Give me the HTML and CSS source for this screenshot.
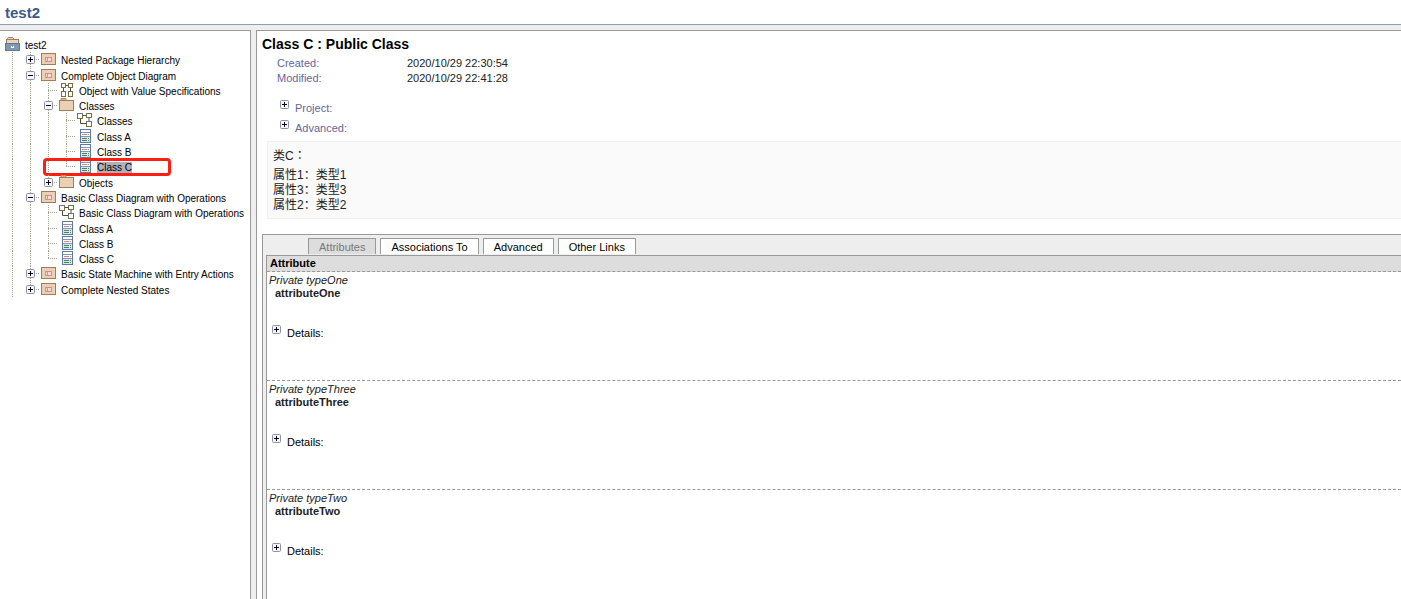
FILE: index.html
```html
<!DOCTYPE html>
<html lang="zh-CN">
<head>
    <meta charset="UTF-8">
    <meta name="viewport" content="width=device-width, initial-scale=1.0">
    <title>test2</title>
    <link rel="stylesheet" href="styles.css">
</head>
<body>
    <!-- 图标定义 -->
    <svg class="defs" aria-hidden="true">
        <symbol id="i-root" viewBox="0 0 15 14">
            <path d="M2.5 3V1.5L3.5 .5H7.5L8.5 1.5V3" fill="#ecd3bd" stroke="#a37b58"/>
            <rect x="1.5" y="2.5" width="12" height="5" fill="#ecd3bd" stroke="#a37b58"/>
            <rect x=".5" y="6.5" width="14" height="7" fill="#8099b3" stroke="#5c7896"/>
            <path d="M6 9h1v1h1v-1h1v2h-3z" fill="#fff"/>
        </symbol>
        <symbol id="i-package" viewBox="0 0 15 14">
            <rect x=".5" y="1.5" width="14" height="11" fill="#ecd0b5" stroke="#a37b58"/>
            <rect x="4.5" y="5.5" width="6" height="4" fill="#f8dcd8" stroke="#cf8f90"/>
            <path d="M6.5 5.5v4" stroke="#cf8f90"/>
        </symbol>
        <symbol id="i-folder" viewBox="0 0 15 14">
            <path d="M2 2.5V.5H7V2.5" fill="#d9ae8a" stroke="#b98d69"/>
            <rect x=".5" y="2.5" width="14" height="10" fill="#ecd0b5" stroke="#a37b58"/>
        </symbol>
        <symbol id="i-object" viewBox="0 0 15 14">
            <path d="M6 2.5h3M4.5 5v4M11.5 5v4" stroke="#4c4c3a" fill="none"/>
            <g fill="#fff" stroke="#727246">
                <rect x="2.5" y=".5" width="4" height="4"/>
                <rect x="9.5" y=".5" width="4" height="4"/>
                <rect x="2.5" y="8.5" width="4" height="5"/>
                <rect x="9.5" y="8.5" width="4" height="5"/>
            </g>
        </symbol>
        <symbol id="i-diagram" viewBox="0 0 15 14">
            <path d="M5 2.5h5M3.5 5v5.5H10M12 5v4" stroke="#4c4c3a" fill="none"/>
            <rect x=".5" y=".5" width="5" height="5" fill="#fff" stroke="#727246"/>
            <path d="M0 .5h6" stroke="#5e78a8"/>
            <rect x="9.5" y=".5" width="5" height="4" fill="#fff" stroke="#727246"/>
            <rect x="9.5" y="8.5" width="5" height="5" fill="#fff" stroke="#727246"/>
            <path d="M9 8.5h6" stroke="#5e78a8"/>
        </symbol>
        <symbol id="i-class" viewBox="0 0 15 14">
            <rect x="3.5" y=".5" width="10" height="13" fill="#fff" stroke="#5e78a8"/>
            <path d="M4 8h9v5H4z" fill="#d3ede0"/>
            <path d="M4 3.5h9M4 7.5h9" stroke="#7f95bb"/>
            <path d="M5 5.5h5M11 5.5h1" stroke="#e08080"/>
            <path d="M5 9.5h5M11 9.5h1M5 11.5h5M11 11.5h1" stroke="#4f7f5e"/>
        </symbol>
        <symbol id="i-plus" viewBox="0 0 9 9">
            <rect x=".5" y=".5" width="8" height="8" rx="1" fill="#f4f4fa" stroke="#8c90a4"/>
            <path d="M2 4.5h5M4.5 2v5" stroke="#000"/>
        </symbol>
        <symbol id="i-minus" viewBox="0 0 9 9">
            <rect x=".5" y=".5" width="8" height="8" rx="1" fill="#f4f4fa" stroke="#8c90a4"/>
            <path d="M2 4.5h5" stroke="#000"/>
        </symbol>
    </svg>

    <header class="page-header">
        <h1>test2</h1>
    </header>

    <div class="layout">
        <!-- 左侧目录树 -->
        <nav class="sidebar">
            <ul class="tree">
                <li><svg class="icon"><use href="#i-root"/></svg><a href="#">test2</a></li>
                <li><i class="line"></i><i class="tee"><button class="toggle" aria-label="展开"><svg><use href="#i-plus"/></svg></button></i><svg class="icon"><use href="#i-package"/></svg><a href="#">Nested Package Hierarchy</a></li>
                <li><i class="line"></i><i class="tee"><button class="toggle" aria-label="折叠"><svg><use href="#i-minus"/></svg></button></i><svg class="icon"><use href="#i-package"/></svg><a href="#">Complete Object Diagram</a></li>
                <li><i class="line"></i><i class="line"></i><i class="tee"></i><svg class="icon"><use href="#i-object"/></svg><a href="#">Object with Value Specifications</a></li>
                <li><i class="line"></i><i class="line"></i><i class="tee"><button class="toggle" aria-label="折叠"><svg><use href="#i-minus"/></svg></button></i><svg class="icon"><use href="#i-folder"/></svg><a href="#">Classes</a></li>
                <li><i class="line"></i><i class="line"></i><i class="line"></i><i class="tee"></i><svg class="icon"><use href="#i-diagram"/></svg><a href="#">Classes</a></li>
                <li><i class="line"></i><i class="line"></i><i class="line"></i><i class="tee"></i><svg class="icon"><use href="#i-class"/></svg><a href="#">Class A</a></li>
                <li><i class="line"></i><i class="line"></i><i class="line"></i><i class="tee"></i><svg class="icon"><use href="#i-class"/></svg><a href="#">Class B</a></li>
                <li class="marked"><i class="line"></i><i class="line"></i><i class="line"></i><i class="end"></i><svg class="icon"><use href="#i-class"/></svg><a href="#"><span class="selected">Class C</span></a></li>
                <li><i class="line"></i><i class="line"></i><i class="end"><button class="toggle" aria-label="展开"><svg><use href="#i-plus"/></svg></button></i><svg class="icon"><use href="#i-folder"/></svg><a href="#">Objects</a></li>
                <li><i class="line"></i><i class="tee"><button class="toggle" aria-label="折叠"><svg><use href="#i-minus"/></svg></button></i><svg class="icon"><use href="#i-package"/></svg><a href="#">Basic Class Diagram with Operations</a></li>
                <li><i class="line"></i><i class="line"></i><i class="tee"></i><svg class="icon"><use href="#i-diagram"/></svg><a href="#">Basic Class Diagram with Operations</a></li>
                <li><i class="line"></i><i class="line"></i><i class="tee"></i><svg class="icon"><use href="#i-class"/></svg><a href="#">Class A</a></li>
                <li><i class="line"></i><i class="line"></i><i class="tee"></i><svg class="icon"><use href="#i-class"/></svg><a href="#">Class B</a></li>
                <li><i class="line"></i><i class="line"></i><i class="end"></i><svg class="icon"><use href="#i-class"/></svg><a href="#">Class C</a></li>
                <li><i class="line"></i><i class="tee"><button class="toggle" aria-label="展开"><svg><use href="#i-plus"/></svg></button></i><svg class="icon"><use href="#i-package"/></svg><a href="#">Basic State Machine with Entry Actions</a></li>
                <li><i class="line"></i><i class="end"><button class="toggle" aria-label="展开"><svg><use href="#i-plus"/></svg></button></i><svg class="icon"><use href="#i-package"/></svg><a href="#">Complete Nested States</a></li>
            </ul>
        </nav>

        <!-- 元素详情 -->
        <main class="content">
            <h2>Class C : Public Class</h2>
            <dl class="meta">
                <dt>Created:</dt>
                <dd>2020/10/29 22:30:54</dd>
                <dt>Modified:</dt>
                <dd>2020/10/29 22:41:28</dd>
            </dl>
            <div class="sections">
                <div class="expander">
                    <button class="toggle" id="project"><svg><use href="#i-plus"/></svg></button>
                    <label for="project">Project:</label>
                </div>
                <div class="expander">
                    <button class="toggle" id="advanced"><svg><use href="#i-plus"/></svg></button>
                    <label for="advanced">Advanced:</label>
                </div>
            </div>

            <div class="notes">
                <p class="notes-title" lang="zh-TW">类C：</p>
                <p>属性1：类型1</p>
                <p>属性3：类型3</p>
                <p>属性2：类型2</p>
            </div>

            <div class="panel">
                <div class="tabs">
                    <button class="tab active">Attributes</button>
                    <button class="tab">Associations To</button>
                    <button class="tab">Advanced</button>
                    <button class="tab">Other Links</button>
                </div>
                <table class="attributes">
                    <thead>
                        <tr><th>Attribute</th></tr>
                    </thead>
                    <tbody>
                        <tr>
                            <td>
                                <p class="type">Private typeOne</p>
                                <p class="name">attributeOne</p>
                                <div class="expander">
                                    <button class="toggle" id="details1"><svg><use href="#i-plus"/></svg></button>
                                    <label for="details1">Details:</label>
                                </div>
                            </td>
                        </tr>
                        <tr>
                            <td>
                                <p class="type">Private typeThree</p>
                                <p class="name">attributeThree</p>
                                <div class="expander">
                                    <button class="toggle" id="details2"><svg><use href="#i-plus"/></svg></button>
                                    <label for="details2">Details:</label>
                                </div>
                            </td>
                        </tr>
                        <tr>
                            <td>
                                <p class="type">Private typeTwo</p>
                                <p class="name">attributeTwo</p>
                                <div class="expander">
                                    <button class="toggle" id="details3"><svg><use href="#i-plus"/></svg></button>
                                    <label for="details3">Details:</label>
                                </div>
                            </td>
                        </tr>
                    </tbody>
                </table>
            </div>
        </main>
    </div>
</body>
</html>
```
FILE: styles.css
```css
* {
    margin: 0;
    padding: 0;
    box-sizing: border-box;
}

body {
    display: flex;
    flex-direction: column;
    height: 100vh;
    overflow: hidden;
    font-family: "Liberation Sans", Arial, "Noto Sans CJK SC", sans-serif;
    font-size: 11px;
    line-height: 15px;
    color: #222;
    background: #eee;
}

.defs {
    display: none;
}

.page-header {
    padding: 4px 5px 2px;
    background: #fff;
    border-bottom: 1px solid #8c9db5;
}

.page-header h1 {
    font-size: 15px;
    line-height: 18px;
    color: #3d5a8c;
}

.layout {
    display: flex;
    flex: 1;
    gap: 5px;
    min-height: 0;
    padding-top: 5px;
}

/* 目录树 */
.sidebar {
    flex: 0 0 251px;
    padding: 6px 3px;
    overflow: hidden;
    background: #fff;
    border-top: 1px solid #999;
    border-right: 1px solid #999;
}

.tree {
    display: grid;
    grid-auto-rows: 1fr;
    height: 260px;
    list-style: none;
    font-size: 10px;
}

.tree li {
    position: relative;
    display: flex;
    align-items: flex-start;
    min-height: 0;
}

.tree li > i {
    --dots-v: repeating-linear-gradient(#a6a28c 0 1px, transparent 1px 2px);
    --dots-h: repeating-linear-gradient(90deg, #a6a28c 0 1px, transparent 1px 2px);
    flex: 0 0 18px;
    align-self: stretch;
    padding: 3px 0 0 5px;
    background-repeat: no-repeat;
}

.tree .line {
    background-image: var(--dots-v);
    background-position: 9px 0;
    background-size: 1px 100%;
}

.tree .tee {
    background-image: var(--dots-v), var(--dots-h);
    background-position: 9px 0, 9px 7px;
    background-size: 1px 100%, 11px 1px;
}

.tree .end {
    background-image: var(--dots-v), var(--dots-h);
    background-position: 9px 0, 9px 7px;
    background-size: 1px 8px, 11px 1px;
}

.tree a {
    margin: 3px 0 0 5px;
    line-height: 12px;
    color: #000;
    text-decoration: none;
    white-space: nowrap;
}

.tree .selected {
    background: #b0b0bc;
}

.marked::after {
    content: "";
    position: absolute;
    top: -1px;
    left: 40px;
    box-sizing: border-box;
    width: 128px;
    height: 18px;
    border: 3px solid #fc1f12;
    border-radius: 4px;
}

.icon {
    flex: none;
    width: 15px;
    height: 14px;
    margin-left: 2px;
}

.toggle {
    display: block;
    width: 9px;
    height: 9px;
    border: none;
    background: none;
    cursor: pointer;
}

.toggle svg {
    display: block;
    width: 9px;
    height: 9px;
}

/* 详情区域 */
.content {
    flex: 1;
    min-width: 0;
    padding: 4px 0 0 5px;
    overflow: hidden;
    background: #fff;
    border-top: 1px solid #999;
    border-left: 1px solid #999;
}

.content h2 {
    font-size: 14px;
    line-height: 18px;
    color: #000;
}

.meta {
    display: grid;
    grid-template-columns: 130px 1fr;
    margin: 3px 0 0 15px;
}

.meta dt,
.sections label {
    color: #666699;
}

.sections {
    padding: 12px 0 3px 18px;
}

.expander {
    display: flex;
    gap: 6px;
    height: 20px;
}

.expander .toggle {
    margin-top: 2px;
}

.expander label {
    margin-top: 3px;
}

.notes {
    margin-left: 5px;
    padding: 7px 5px 5px;
    font-size: 12px;
    background: #fafafa;
    border: 1px solid #eee;
    border-right: none;
}

.notes-title {
    margin-bottom: 4px;
    font-family: "Liberation Sans", Arial, "Noto Sans CJK TC", sans-serif;
}

.panel {
    margin-top: 15px;
    padding: 3px 0 0 3px;
    background: #eee;
    border-top: 1px solid #999;
    border-left: 1px solid #999;
}

.tabs {
    display: flex;
    gap: 4px;
    padding-left: 42px;
}

.tab {
    height: 16px;
    padding: 0 10px;
    font-family: inherit;
    font-size: 11px;
    line-height: 16px;
    color: #000;
    background: #fff;
    border: 1px solid #999;
    border-bottom: none;
    cursor: pointer;
}

.tab.active {
    color: #777;
    background: #ddd;
}

.attributes {
    width: 100%;
    margin-top: 1px;
    border-collapse: separate;
    border-spacing: 0;
    border-top: 1px solid #999;
    border-left: 1px solid #999;
}

.attributes th {
    padding: 0 3px;
    text-align: left;
    color: #000;
    background: #ddd;
    border-bottom: 1px dashed #999;
}

.attributes td {
    height: 109px;
    padding: 2px 2px 0;
    vertical-align: top;
    background: #fff;
    border-bottom: 1px dashed #999;
}

.attributes tr:last-child td {
    border-bottom: none;
}

.attributes thead tr:last-child th {
    border-bottom: 1px dashed #999;
}

.attributes p {
    line-height: 13px;
}

.attributes .type {
    font-style: italic;
}

.attributes .name {
    padding-left: 6px;
    font-weight: bold;
}

.attributes .expander {
    margin-top: 23px;
    padding-left: 3px;
    color: #000;
}
```
